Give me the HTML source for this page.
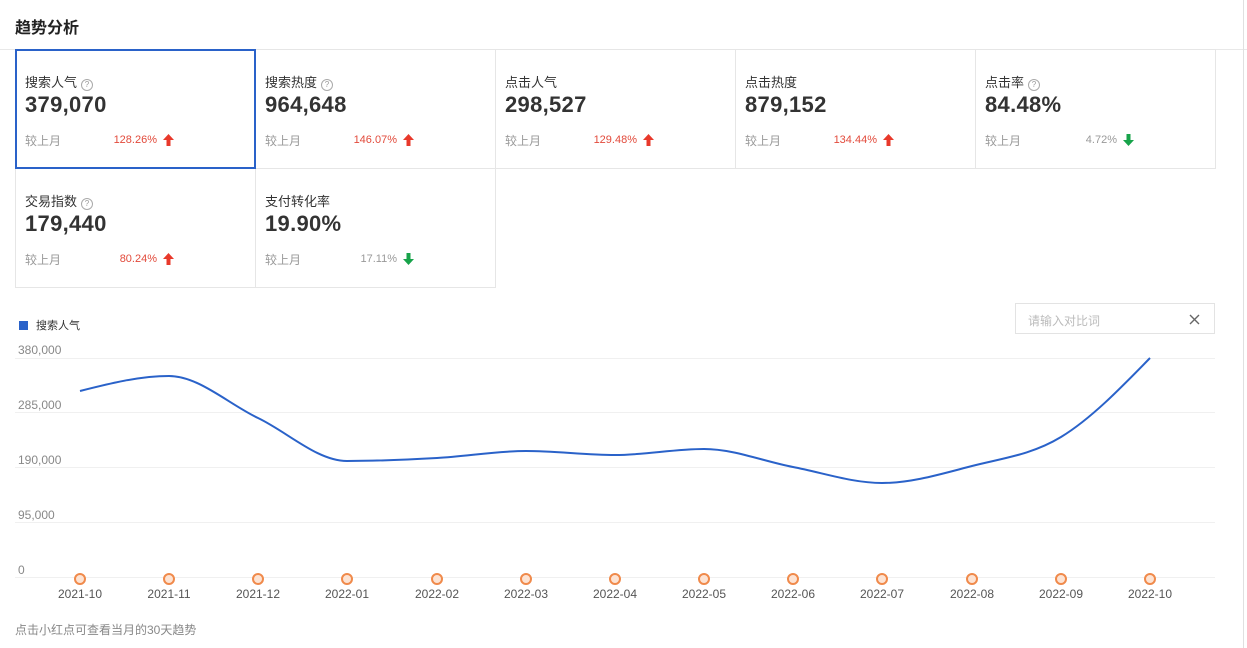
<!DOCTYPE html>
<html><head><meta charset="utf-8">
<style>
*{margin:0;padding:0;box-sizing:border-box}
body{width:1247px;height:648px;background:#fff;font-family:"Liberation Sans","Noto Sans CJK SC",sans-serif;position:relative;overflow:hidden;color:#333}
.title{position:absolute;left:15px;top:14px;font-size:16px;font-weight:bold;color:#222}
.hline{position:absolute;left:0;top:49px;width:1247px;height:1px;background:#e8e8e8}
.vline{position:absolute;left:1243px;top:0;width:1px;height:648px;background:#e0e0e0}
.card{position:absolute;width:241px;height:120px;border:1px solid #e6e6e6;background:#fff}
.card.active{border:2px solid #2a62c9;z-index:2}
.card .lab{position:absolute;left:9px;top:22px;font-size:13px;color:#333}
.card.active .lab{left:8px;top:21px}
.q{display:inline-block;width:12px;height:12px;border:1px solid #aaa;border-radius:50%;font-size:8px;line-height:10px;text-align:center;color:#999;margin-left:4px;vertical-align:0px}
.card .val{position:absolute;left:9px;top:42px;font-size:22px;font-weight:bold;color:#333;letter-spacing:0.3px}
.card.active .val{left:8px;top:41px}
.card .cmp{position:absolute;left:9px;top:82px;font-size:12px;color:#999}
.card.active .cmp{left:8px;top:81px}
.card .pct{position:absolute;right:98px;top:84px;font-size:11px;color:#e24a3b;text-align:right}
.card.active .pct{right:97px;top:83px}
.pct.g{color:#999}
.arr{position:absolute;left:147px;top:84px;width:11px;height:12px}
.card.active .arr{left:146px;top:83px}
.legend{position:absolute;left:19px;top:317px;font-size:11px;color:#333}
.legend i{display:inline-block;width:9px;height:9px;background:#2a62c9;margin-right:8px;vertical-align:-1px}
.inp{position:absolute;left:1015px;top:303px;width:200px;height:31px;border:1px solid #e3e3e3;font-size:12px;color:#bbb;padding:8px 12px}
.inp svg{position:absolute;right:14px;top:10px}
.note{position:absolute;left:15px;top:621px;font-size:12px;color:#888}
</style></head><body>
<div class="title">趋势分析</div>
<div class="hline"></div>
<div class="vline"></div>

<div class="card active" style="left:15px;top:49px"><div class="lab">搜索人气<span class="q">?</span></div><div class="val">379,070</div><div class="cmp">较上月</div><div class="pct">128.26%</div><svg class="arr" viewBox="0 0 11 12"><path d="M5.5 0L11 6H7.5V12H3.5V6H0Z" fill="#e8392b"/></svg></div>
<div class="card" style="left:255px;top:49px"><div class="lab">搜索热度<span class="q">?</span></div><div class="val">964,648</div><div class="cmp">较上月</div><div class="pct">146.07%</div><svg class="arr" viewBox="0 0 11 12"><path d="M5.5 0L11 6H7.5V12H3.5V6H0Z" fill="#e8392b"/></svg></div>
<div class="card" style="left:495px;top:49px"><div class="lab">点击人气</div><div class="val">298,527</div><div class="cmp">较上月</div><div class="pct">129.48%</div><svg class="arr" viewBox="0 0 11 12"><path d="M5.5 0L11 6H7.5V12H3.5V6H0Z" fill="#e8392b"/></svg></div>
<div class="card" style="left:735px;top:49px"><div class="lab">点击热度</div><div class="val">879,152</div><div class="cmp">较上月</div><div class="pct">134.44%</div><svg class="arr" viewBox="0 0 11 12"><path d="M5.5 0L11 6H7.5V12H3.5V6H0Z" fill="#e8392b"/></svg></div>
<div class="card" style="left:975px;top:49px"><div class="lab">点击率<span class="q">?</span></div><div class="val">84.48%</div><div class="cmp">较上月</div><div class="pct g">4.72%</div><svg class="arr" viewBox="0 0 11 12"><path d="M5.5 12L11 6H7.5V0H3.5V6H0Z" fill="#17a34a"/></svg></div>
<div class="card" style="left:15px;top:168px"><div class="lab">交易指数<span class="q">?</span></div><div class="val">179,440</div><div class="cmp">较上月</div><div class="pct">80.24%</div><svg class="arr" viewBox="0 0 11 12"><path d="M5.5 0L11 6H7.5V12H3.5V6H0Z" fill="#e8392b"/></svg></div>
<div class="card" style="left:255px;top:168px"><div class="lab">支付转化率</div><div class="val">19.90%</div><div class="cmp">较上月</div><div class="pct g">17.11%</div><svg class="arr" viewBox="0 0 11 12"><path d="M5.5 12L11 6H7.5V0H3.5V6H0Z" fill="#17a34a"/></svg></div>

<div class="legend"><i></i>搜索人气</div>
<div class="inp">请输入对比词<svg width="11" height="11" viewBox="0 0 11 11"><path d="M1 1L10 10M10 1L1 10" stroke="#666" stroke-width="1.4"/></svg></div>

<svg id="ch" style="position:absolute;left:0;top:0" width="1247" height="648" font-family="Liberation Sans, sans-serif">
<g stroke="#f0f0f0" stroke-width="1">
<line x1="15" y1="358.5" x2="1215" y2="358.5"/>
<line x1="15" y1="412.5" x2="1215" y2="412.5"/>
<line x1="15" y1="467.5" x2="1215" y2="467.5"/>
<line x1="15" y1="522.5" x2="1215" y2="522.5"/>
<line x1="15" y1="577.5" x2="1215" y2="577.5"/>
</g>
<g font-size="12" fill="#888">
<text x="18" y="354">380,000</text>
<text x="18" y="409">285,000</text>
<text x="18" y="464">190,000</text>
<text x="18" y="519">95,000</text>
<text x="18" y="574">0</text>
</g>
<path id="ln" fill="none" stroke="#2a62c9" stroke-width="2"/>
<g id="dots"></g>
<g id="xl" font-size="12" fill="#555" text-anchor="middle"></g>
</svg>
<div class="note">点击小红点可查看当月的30天趋势</div>
<script>
var xs=[80,169,258,347,437,526,615,704,793,882,972,1061,1150];
var ys=[391,376,418,461,458,451,455,449,467,483,466,437,358];
var lb=["2021-10","2021-11","2021-12","2022-01","2022-02","2022-03","2022-04","2022-05","2022-06","2022-07","2022-08","2022-09","2022-10"];
var n=xs.length,m=[],s=[];
for(var i=0;i<n-1;i++)s.push((ys[i+1]-ys[i])/(xs[i+1]-xs[i]));
for(var i=0;i<n;i++){
 if(i==0)m.push(s[0]);else if(i==n-1)m.push(s[n-2]);
 else{ if(s[i-1]*s[i]<=0)m.push(0); else{var h0=xs[i]-xs[i-1],h1=xs[i+1]-xs[i];var p=(s[i-1]*h1+s[i]*h0)/(h0+h1);m.push((Math.sign(s[i-1])+Math.sign(s[i]))*Math.min(Math.abs(s[i-1]),Math.abs(s[i]),0.5*Math.abs(p)));}}
}
m[0]=(3*s[0]-m[1])/2; m[n-1]=(3*s[n-2]-m[n-2])/2;
var d="M"+xs[0]+" "+ys[0];
for(var i=0;i<n-1;i++){var h=(xs[i+1]-xs[i])/3;
 d+=" C"+(xs[i]+h)+" "+(ys[i]+m[i]*h)+" "+(xs[i+1]-h)+" "+(ys[i+1]-m[i+1]*h)+" "+xs[i+1]+" "+ys[i+1];}
document.getElementById("ln").setAttribute("d",d);
var g=document.getElementById("dots"),x=document.getElementById("xl"),a="",b="";
for(var i=0;i<n;i++){
 a+='<circle cx="'+xs[i]+'" cy="579" r="5" fill="#fde3d3" stroke="#f08a4b" stroke-width="2"/>';
 b+='<text x="'+xs[i]+'" y="598">'+lb[i]+'</text>';
}
g.innerHTML=a;x.innerHTML=b;
</script>
</body></html>
